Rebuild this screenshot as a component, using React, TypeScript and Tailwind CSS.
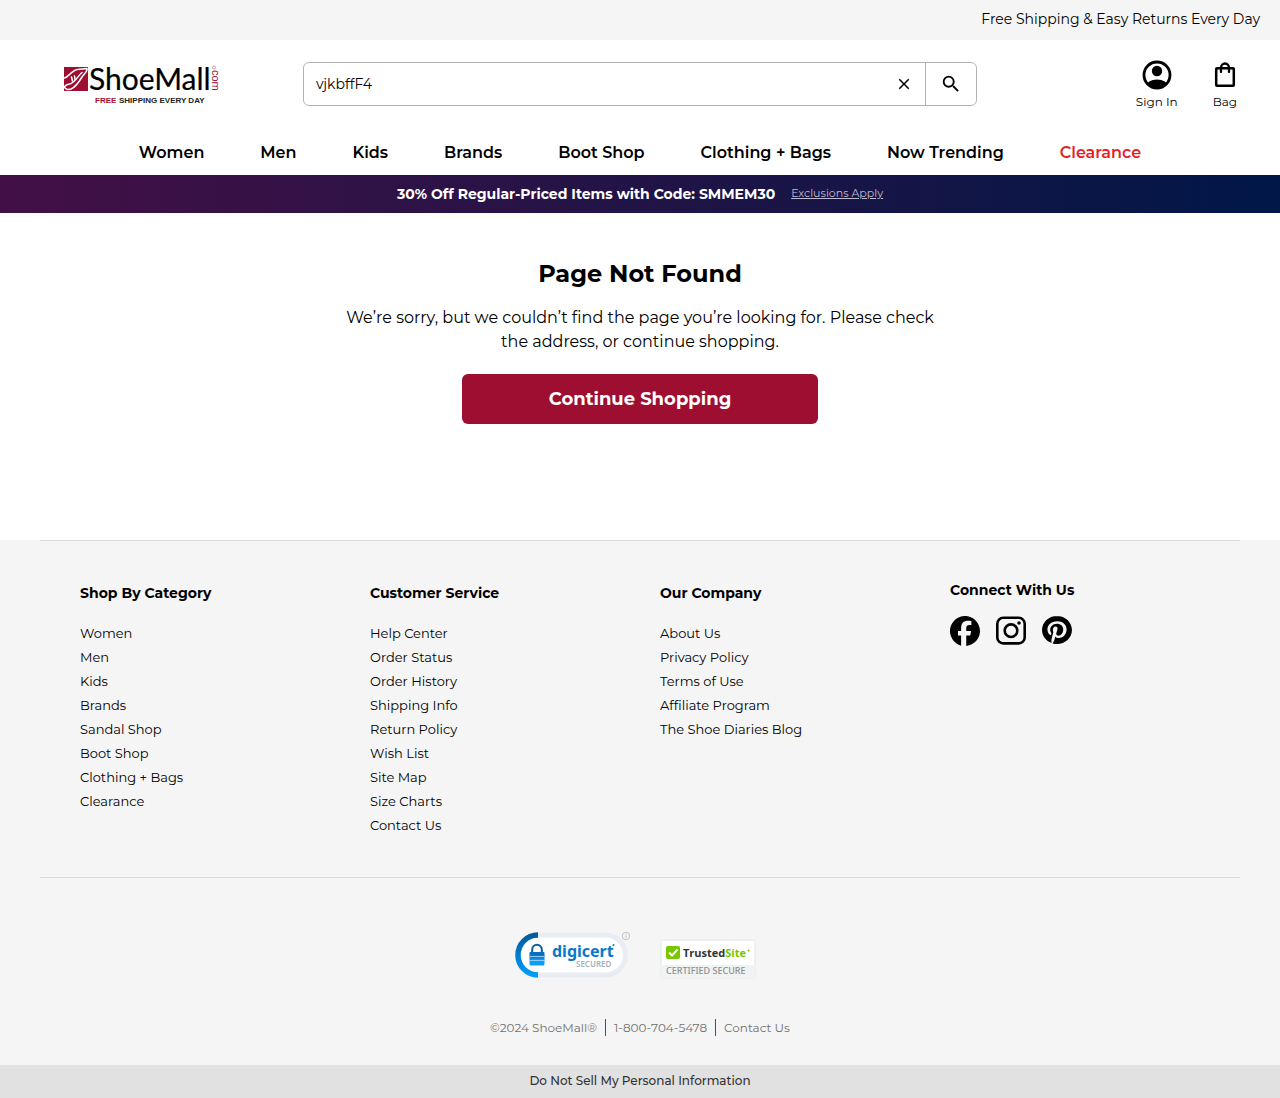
import React from "react";

const nav = ["Women", "Men", "Kids", "Brands", "Boot Shop", "Clothing + Bags", "Now Trending", "Clearance"];

const columns = [
  {
    title: "Shop By Category",
    links: ["Women", "Men", "Kids", "Brands", "Sandal Shop", "Boot Shop", "Clothing + Bags", "Clearance"],
  },
  {
    title: "Customer Service",
    links: ["Help Center", "Order Status", "Order History", "Shipping Info", "Return Policy", "Wish List", "Site Map", "Size Charts", "Contact Us"],
  },
  {
    title: "Our Company",
    links: ["About Us", "Privacy Policy", "Terms of Use", "Affiliate Program", "The Shoe Diaries Blog"],
  },
];

function Logo() {
  return (
    <svg viewBox="0 0 156 40" className="h-10 w-[156px] overflow-visible" role="img" aria-label="ShoeMall.com">
      <rect x="1" y="3" width="24" height="24" fill="#9e0e31" />
      <g fill="none" stroke="#fff" strokeWidth="1.5" strokeLinecap="round" strokeLinejoin="round">
        <path d="M1.500 14 C5 13 7 9 11 7 C14 4 20 5.500 24 4.500 C25 7 21 10 19 13 C16 18 13 23 8 25 C5 26 2 25.500 1.500 23 C2 21 5 20.500 8 19.500 C12 18 15 12 19 8.500" />
        <path d="M8.500 13 L9.500 17 M11.500 12 L12 15.500" />
      </g>
      <text x="26" y="26" fontSize="30" fontFamily="Lato" fill="#000" stroke="#000" strokeWidth=".2">ShoeMall</text>
      <text x="32" y="39" fontSize="8" fontWeight="700" fontFamily="Liberation Sans" fill="#9e0e31">FREE</text>
      <text x="56" y="39" fontSize="8" fontWeight="700" fontFamily="Liberation Sans" fill="#222">SHIPPING EVERY DAY</text>
      <text transform="translate(149 6) rotate(90)" fontSize="11" fontFamily="Liberation Sans" fill="#9e0e31">com</text>
      <circle cx="151" cy="3.500" r="1.500" fill="none" stroke="#9e0e31" strokeWidth=".4" />
    </svg>
  );
}

function DigiCert() {
  return (
    <svg viewBox="0 0 118 50" className="h-[50px] w-[118px]" role="img" aria-label="DigiCert Secured">
      <defs>
        <linearGradient id="ring" x1="0" y1="0" x2="0" y2="1">
          <stop offset="0" stopColor="#005c9e" />
          <stop offset="1" stopColor="#009cf9" />
        </linearGradient>
      </defs>
      <rect x="3.500" y="6" width="108" height="40" rx="20" fill="#fff" stroke="#e7edf2" strokeWidth="5" />
      <path d="M24 6 A20 20 0 0 0 24 46" fill="none" stroke="url(#ring)" strokeWidth="5.500" />
      <path d="M18.200 24 V20.500 a4.800 4.800 0 0 1 9.600 0 V24" fill="none" stroke="#0b5d9c" strokeWidth="2" />
      <rect x="15.500" y="23" width="15" height="5" rx="1" fill="#0a6ebd" />
      <rect x="15.500" y="26.500" width="15" height="4.500" fill="#0d86de" />
      <rect x="15.500" y="30" width="15" height="6.500" rx="1.500" fill="#0c9dfc" />
      <path d="M15.500 27.500h15M15.500 31.500h15" stroke="#c3e3fb" strokeWidth=".7" />
      <text x="38" y="28" fontSize="16" fontWeight="700" fontFamily="Noto Sans" fill="#0879c9">digicert</text>
      <circle cx="99.500" cy="16" r="1" fill="#0879c9" />
      <text x="62" y="38" fontSize="8" fontWeight="600" fontFamily="Noto Sans" fill="#a4b1bd">SECURED</text>
      <circle cx="112" cy="7" r="3.700" fill="none" stroke="#aab6c0" strokeWidth=".8" />
      <path d="M112 6.500v2.500M112 4.800v.8" stroke="#aab6c0" strokeWidth=".8" />
    </svg>
  );
}

function TrustedSite() {
  return (
    <svg viewBox="0 0 96 40" className="h-10 w-24" role="img" aria-label="TrustedSite Certified Secure">
      <rect x="1" y="1" width="94" height="38" rx="1.500" fill="#fff" stroke="#e3e5e5" />
      <path d="M1.500 26H94.500V38.500H1.500z" fill="#f1f3f3" />
      <rect x="6" y="7" width="14" height="13" rx="2" fill="#76c700" />
      <path d="M9 13.500l3 3 5.500-6" fill="none" stroke="#fff" strokeWidth="2.200" />
      <text x="23" y="18" fontSize="11" fontWeight="700" fontFamily="Open Sans" fill="#2f3333">Trusted<tspan fill="#76c700">Site</tspan></text>
      <circle cx="88.500" cy="11.500" r="1" fill="#76c700" />
      <text x="6" y="35" fontSize="9" fontWeight="500" fontFamily="Noto Sans" fill="#8b908f">CERTIFIED SECURE</text>
    </svg>
  );
}

export default function App() {
  return (
    <div className="bg-white font-['Montserrat','Inter',sans-serif] text-black">
      <div className="flex h-10 items-center justify-end bg-[#f5f5f5] px-5 pb-0.5 text-sm">
        Free Shipping &amp; Easy Returns Every Day
      </div>

      <header>
        <div className="grid h-[88px] grid-cols-[1fr_674px_1fr] items-center">
          <a href="#" className="ml-[63px] justify-self-start">
            <Logo />
          </a>
          <form className="flex h-11 overflow-hidden rounded-md border border-[#b3b3b3]" onSubmit={(e) => e.preventDefault()}>
            <input aria-label="Search" defaultValue="vjkbffF4" className="min-w-0 flex-1 px-3 text-sm outline-none" />
            <button type="button" aria-label="Clear search" className="flex w-[42px] items-center justify-center">
              <svg viewBox="0 0 24 24" className="size-[18px]"><path d="M19 6.410 17.590 5 12 10.590 6.410 5 5 6.410 10.590 12 5 17.590 6.410 19 12 13.410 17.590 19 19 17.590 13.410 12z" /></svg>
            </button>
            <button type="submit" aria-label="Search" className="flex w-[51px] items-center justify-center border-l border-[#b3b3b3]">
              <svg viewBox="0 0 24 24" className="size-[22px]"><path d="M15.500 14h-.790l-.280-.270A6.471 6.471 0 0 0 16 9.500 6.500 6.500 0 1 0 9.500 16c1.610 0 3.090-.590 4.230-1.570l.270.280v.790l5 4.990L20.490 19l-4.990-5zm-6 0C7.010 14 5 11.990 5 9.500S7.010 5 9.500 5 14 7.010 14 9.500 11.990 14 9.500 14z" /></svg>
            </button>
          </form>
          <div className="mr-[43px] flex gap-[35px] justify-self-end pt-0.5 text-xs">
            <a href="#" className="flex flex-col items-center gap-1">
              <svg viewBox="0 0 30 30" className="size-[30px]">
                <defs><clipPath id="face"><circle cx="15" cy="15" r="13" /></clipPath></defs>
                <circle cx="15" cy="15" r="13" fill="none" stroke="#000" strokeWidth="2.800" />
                <circle cx="15" cy="11" r="5.200" />
                <ellipse cx="15" cy="26.500" rx="11" ry="7" clipPath="url(#face)" />
              </svg>
              Sign In
            </a>
            <a href="#" className="flex flex-col items-center gap-1">
              <svg viewBox="0 0 24 30" className="h-[30px] w-6" fill="none" stroke="#000" strokeLinejoin="round" strokeLinecap="round">
                <rect x="3.200" y="8.200" width="17.600" height="17.600" rx=".8" strokeWidth="2.500" />
                <path d="M8 12V8a4 4.500 0 0 1 8 0v4" strokeWidth="2.300" />
              </svg>
              Bag
            </a>
          </div>
        </div>
        <nav className="flex h-[47px] items-center justify-center gap-14 pt-0.5 text-base font-semibold">
          {nav.map((n) => (
            <a key={n} href="#" className={n === "Clearance" ? "text-[#e61e28]" : ""}>{n}</a>
          ))}
        </nav>
        <div className="flex h-[38px] items-center justify-center gap-4 bg-linear-to-r/srgb from-[#431046] to-[#001747] text-sm font-bold text-white">
          30% Off Regular-Priced Items with Code: SMMEM30
          <a href="#" className="text-[11px] font-normal text-[#c0bcd0] underline">Exclusions Apply</a>
        </div>
      </header>

      <main className="flex flex-col items-center px-5 pt-[45px] pb-[116px] text-center">
        <h1 className="text-2xl leading-8 font-bold">Page Not Found</h1>
        <p className="mt-4 max-w-[600px] text-base leading-6">
          We’re sorry, but we couldn’t find the page you’re looking for. Please check the address, or continue shopping.
        </p>
        <a href="#" className="mt-5 flex h-[50px] w-full max-w-[356px] items-center justify-center rounded-md bg-[#9e0e31] text-lg font-bold text-white">
          Continue Shopping
        </a>
      </main>

      <footer className="bg-[#f5f5f5]">
        <div className="mx-10 grid grid-cols-4 border-y border-[#d9d9d9] py-10 pl-10">
          {columns.map((c) => (
            <section key={c.title}>
              <h2 className="mb-4 text-sm leading-6 font-bold">{c.title}</h2>
              <ul className="text-[13px] leading-6">
                {c.links.map((l) => <li key={l}><a href="#">{l}</a></li>)}
              </ul>
            </section>
          ))}
          <section>
            <h2 className="text-sm leading-[18px] font-bold">Connect With Us</h2>
            <div className="mt-[17px] flex gap-4">
              <a href="#" aria-label="Facebook">
                <svg viewBox="0 0 24 24" className="size-[30px]"><path d="M24 12.073C24 5.405 18.627 0 12 0S0 5.405 0 12.073C0 17.500 3.700 22.300 8.900 23.700V15.563H6.400v-3.490h2.500v-2.400c0-3.900 1.900-5.900 5.600-5.900 .8 0 2.100.15 2.600.3v3.150c-.3 0-.8-.05-1.400-.05-2 0-2.700.8-2.700 2.700v2.200h3.900l-.7 3.490h-3.200V24C19.400 23.300 24 18.100 24 12.073z" /></svg>
              </a>
              <a href="#" aria-label="Instagram">
                <svg viewBox="0 0 30 30" className="size-[30px]" fill="none" stroke="#000" strokeWidth="2.600">
                  <rect x="1.300" y="1.800" width="27.400" height="25.600" rx="6" />
                  <circle cx="15" cy="14.700" r="6.300" />
                  <circle cx="23" cy="7" r="1.800" fill="#000" stroke="none" />
                </svg>
              </a>
              <a href="#" aria-label="Pinterest">
                <svg viewBox="0 0 24 24" preserveAspectRatio="none" className="h-7 w-[30px]"><path d="M12.017 0C5.396 0 .029 5.367.029 11.987c0 5.079 3.158 9.417 7.618 11.162-.105-.949-.199-2.403.041-3.439.219-.937 1.406-5.957 1.406-5.957s-.359-.720-.359-1.781c0-1.663.967-2.911 2.168-2.911 1.024 0 1.518.769 1.518 1.688 0 1.029-.653 2.567-.992 3.992-.285 1.193.600 2.165 1.775 2.165 2.128 0 3.768-2.245 3.768-5.487 0-2.861-2.063-4.869-5.008-4.869-3.410 0-5.409 2.562-5.409 5.199 0 1.033.394 2.143.889 2.741.099.120.112.225.085.345-.090.375-.293 1.199-.334 1.363-.053.225-.172.271-.401.165-1.495-.690-2.433-2.878-2.433-4.646 0-3.776 2.748-7.252 7.920-7.252 4.158 0 7.392 2.967 7.392 6.923 0 4.135-2.607 7.462-6.233 7.462-1.214 0-2.354-.629-2.758-1.379l-.749 2.848c-.269 1.045-1.004 2.352-1.498 3.146 1.123.345 2.306.535 3.550.535 6.607 0 11.985-5.365 11.985-11.987C23.970 5.390 18.592.026 11.985.026L12.017 0z" /></svg>
              </a>
            </div>
          </section>
        </div>
        <div className="flex flex-col items-center pt-[51px] pb-[29px]">
          <div className="flex items-end gap-7 pr-2.5">
            <DigiCert />
            <TrustedSite />
          </div>
          <div className="mt-10 flex text-xs leading-[17px] text-[#707070]">
            <span className="pr-2">©2024 ShoeMall®</span>
            <a href="#" className="border-l border-[#505050] px-2">1-800-704-5478</a>
            <a href="#" className="border-l border-[#505050] pl-2">Contact Us</a>
          </div>
        </div>
        <div className="flex h-[33px] items-center justify-center bg-[#e1e1e1] pb-0.5 text-xs font-medium text-[#333]">
          <a href="#">Do Not Sell My Personal Information</a>
        </div>
      </footer>
    </div>
  );
}
